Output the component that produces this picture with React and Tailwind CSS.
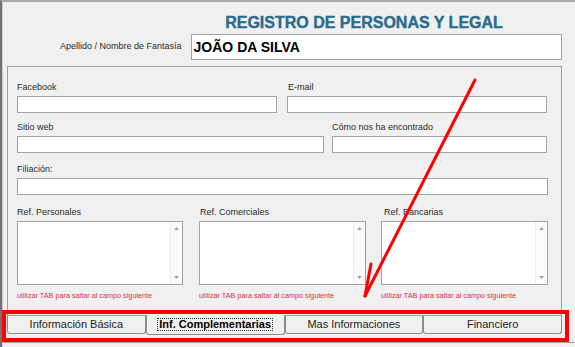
import React from "react";

const font = { fontFamily: '"Liberation Sans", Arial, sans-serif' };

function Field({ label, width, labelClass = "" }) {
  return (
    <div className="flex flex-col" style={{ width }}>
      <div className={`h-[12px] text-[9px] leading-[12px] text-[#2a2a2a] ${labelClass}`}>{label}</div>
      <div className="mt-[3px] h-[17px] border border-[#a3a3a3] bg-white" />
    </div>
  );
}

function Memo({ label, width, labelClass = "" }) {
  return (
    <div className="flex flex-col" style={{ width }}>
      <div className={`h-[12px] text-[9px] leading-[12px] text-[#2a2a2a] ${labelClass}`}>{label}</div>
      <div className="mt-[3px] flex h-[64px] border border-[#a3a3a3] bg-white">
        <div className="flex-1" />
        <div className="flex w-[12px] flex-col items-center justify-between border-l border-[#ececec] bg-[#fbfbfb] py-[5px]">
          <svg width="5" height="3" viewBox="0 0 5 3">
            <polygon points="2.5,0 5,3 0,3" fill="#a0a0a0" />
          </svg>
          <svg width="5" height="3" viewBox="0 0 5 3">
            <polygon points="0,0 5,0 2.5,3" fill="#a0a0a0" />
          </svg>
        </div>
      </div>
      <div className="mt-[6px] h-[10px] text-[7.25px] leading-[10px] text-[#d8333f]">
        utilizar TAB para saltar al campo siguiente
      </div>
    </div>
  );
}

function Tab({ children, active }) {
  if (active) {
    return (
      <div className="flex h-[20px] w-[139px] items-center justify-center rounded-b-[3px] border-x border-b border-[#8c8c8c] bg-[#f0f0f0]">
        <span className="border border-dotted border-[#333] px-[1px] text-[11px] leading-[11px] font-bold text-black">
          {children}
        </span>
      </div>
    );
  }
  return (
    <div className="h-[20px] w-[139px] border-t border-[#a0a0a0]">
      <div className="flex h-[18px] items-center justify-center rounded-b-[3px] border-x border-b border-[#8c8c8c] bg-[#f0f0f0] text-[11px] text-[#222]">
        {children}
      </div>
    </div>
  );
}

export default function App() {
  return (
    <div className="relative h-[347px] w-[575px] overflow-hidden bg-[#f0f0f0]" style={font}>
      <div className="h-full border-t-[2px] border-l-[2px] border-t-[#a8a8a8] border-l-[#727272]">
        <div className="h-full border-l border-[#cfcfcf]">
          {/* title */}
          <div className="flex justify-center pl-[150px] pt-[12px]">
            <h1 className="text-[16px] leading-[18px] font-bold text-[#2b6b8c] [-webkit-text-stroke:0.4px_#2b6b8c]">
              REGISTRO DE PERSONAS Y LEGAL
            </h1>
          </div>

          {/* name row */}
          <div className="mt-[2px] flex items-center pl-[57px]">
            <span className="text-[9px] text-[#2a2a2a]">Apellido / Nombre de Fantasía</span>
            <div className="ml-[9px] flex h-[26px] w-[371px] items-center border border-[#a3a3a3] bg-white px-[2px]">
              <span className="text-[14px] font-bold text-black">JOÃO DA SILVA</span>
            </div>
          </div>

          {/* panel */}
          <div className="mt-[6px] ml-[4px] w-[555px]">
            <div className="h-[249px] border-x border-t border-[#a0a0a0] pl-[9px] pt-[14px]">
              <div className="flex gap-[10px]">
                <Field label="Facebook" width={260} />
                <Field label="E-mail" width={260} labelClass="pl-[1px]" />
              </div>
              <div className="mt-[8px] flex gap-[8px]">
                <Field label="Sitio web" width={307} />
                <Field label="Cómo nos ha encontrado" width={215} />
              </div>
              <div className="mt-[10px] flex">
                <Field label="Filiación:" width={531} />
              </div>
              <div className="mt-[11px] flex">
                <Memo label="Ref. Personales" width={166} />
                <div className="ml-[16px]">
                  <Memo label="Ref. Comerciales" width={167} labelClass="pl-[1px]" />
                </div>
                <div className="ml-[15px]">
                  <Memo label="Ref. Bancarias" width={167} labelClass="pl-[3px]" />
                </div>
              </div>
            </div>
            <div className="flex">
              <Tab>Información Básica</Tab>
              <Tab active>Inf. Complementarias</Tab>
              <Tab>Mas Informaciones</Tab>
              <Tab>Financiero</Tab>
            </div>
          </div>
          <div className="mt-[7px] h-px bg-[#a0a0a0]" />
        </div>
      </div>

      {/* annotations */}
      <div className="absolute left-[2px] top-[310px] h-[32px] w-[567px] border-[4px] border-[#ff0000]" />
      <svg className="absolute left-0 top-0" width="575" height="347" viewBox="0 0 575 347">
        <line x1="475" y1="80" x2="365" y2="296" stroke="#ff0000" strokeWidth="3" strokeLinecap="round" />
        <line x1="371" y1="264" x2="365" y2="296" stroke="#ff0000" strokeWidth="3" strokeLinecap="round" />
      </svg>
    </div>
  );
}
